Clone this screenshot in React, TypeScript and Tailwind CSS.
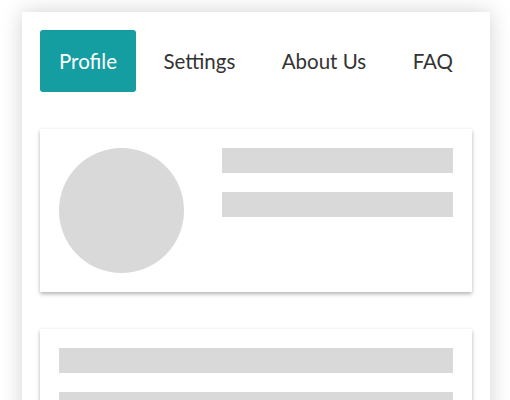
import React from "react";

const tabs = ["Profile", "Settings", "About Us", "FAQ"];

const Bar = ({ className = "" }: { className?: string }) => (
  <div className={"h-[25px] bg-[#d9d9d9] " + className} />
);

const App = () => {
  return (
    <div className="h-[400px] bg-white pt-3 pl-[22px] font-['Lato','Liberation_Sans',sans-serif] overflow-hidden">
      <div className="w-[468px] bg-white shadow-[0_0_20px_rgba(0,0,0,0.18)] p-[18px] h-[420px]">
        <div className="flex justify-between items-center">
          {tabs.map((t, i) => (
            <div
              key={t}
              className={
                i === 0
                  ? "h-[62px] px-[19px] flex items-center rounded-[3px] bg-[#149ea2] text-white text-[20.5px]"
                  : "h-[62px] px-[19px] flex items-center text-[#333333] text-[20.5px]"
              }
            >
              {t}
            </div>
          ))}
        </div>

        <div className="mt-[37px] bg-white shadow-[0_2px_4px_rgba(0,0,0,0.3)] p-[19px] flex">
          <div className="w-[125px] h-[125px] rounded-full bg-[#d9d9d9] shrink-0" />
          <div className="flex-1 ml-[38px] flex flex-col gap-[19px]">
            <Bar />
            <Bar />
          </div>
        </div>

        <div className="mt-[37px] bg-white shadow-[0_2px_4px_rgba(0,0,0,0.3)] p-[19px] flex flex-col gap-[19px]">
          <Bar />
          <Bar />
          <Bar />
        </div>
      </div>
    </div>
  );
};

export default App;
